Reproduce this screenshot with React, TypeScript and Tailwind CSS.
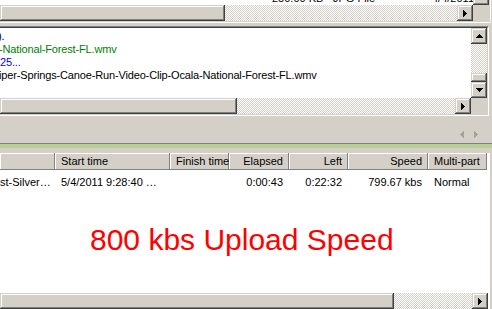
const raised =
  "shadow-[inset_-1px_-1px_#404040,inset_1px_1px_#d4d0c8,inset_-2px_-2px_#808080,inset_2px_2px_#ffffff]";
const checker =
  "bg-[conic-gradient(#ffffff_25%,#d4d0c8_0_50%,#ffffff_0_75%,#d4d0c8_0)] bg-[length:2px_2px]";

type Dir = "up" | "down" | "left" | "right";

const Arrow = ({ dir, color = "#000" }: { dir: Dir; color?: string }) => {
  const rects =
    dir === "right"
      ? [0, 1, 2, 3].map((i) => <rect key={i} x={i} y={i} width={1} height={7 - 2 * i} fill={color} />)
      : dir === "left"
      ? [0, 1, 2, 3].map((i) => <rect key={i} x={3 - i} y={i} width={1} height={7 - 2 * i} fill={color} />)
      : dir === "down"
      ? [0, 1, 2, 3].map((i) => <rect key={i} x={i} y={i} width={7 - 2 * i} height={1} fill={color} />)
      : [0, 1, 2, 3].map((i) => <rect key={i} x={i} y={3 - i} width={7 - 2 * i} height={1} fill={color} />);
  const horiz = dir === "left" || dir === "right";
  return (
    <svg width={horiz ? 4 : 7} height={horiz ? 7 : 4} shapeRendering="crispEdges">
      {rects}
    </svg>
  );
};

const ScrollBtn = ({ dir }: { dir: Dir }) => (
  <div className={`w-4 h-4 shrink-0 bg-[#d4d0c8] ${raised} flex items-center justify-center`}>
    <Arrow dir={dir} />
  </div>
);

const HScroll = ({ thumb }: { thumb: number }) => (
  <div className="flex h-4">
    <div className={`h-4 bg-[#d4d0c8] ${raised}`} style={{ width: thumb }} />
    <div className={`flex-1 ${checker}`} />
    <ScrollBtn dir="right" />
  </div>
);

const columns = [
  { label: "", w: "w-[55px]", align: "text-left" },
  { label: "Start time", w: "w-[115px]", align: "text-left" },
  { label: "Finish time", w: "w-[59px]", align: "text-left" },
  { label: "Elapsed", w: "w-[60px]", align: "text-right" },
  { label: "Left", w: "w-[59px]", align: "text-right" },
  { label: "Speed", w: "w-[80px]", align: "text-right" },
  { label: "Multi-part", w: "w-[59px]", align: "text-left" },
];

const row = ["st-Silver…", "5/4/2011 9:28:40 …", "", "0:00:43", "0:22:32", "799.67 kbs", "Normal"];

export default function App() {
  return (
    <div className="w-[492px] h-[309px] overflow-hidden bg-[#d4d0c8] flex flex-col font-['Liberation_Sans',Arial,sans-serif] text-[11px] text-black">
      {/* file list above, scrolled to its end */}
      <div className="flex flex-col w-[491px]">
        <div className="flex">
          <div className="w-[473px] flex flex-col">
            <div className="h-[5px] bg-white overflow-hidden">
              <div className="-mt-[8px] leading-[13px] flex whitespace-nowrap">
                <span className="w-[272px]" />
                <span className="w-[61px]">250.00 KB</span>
                <span className="w-[99px]">JPG File</span>
                <span className="w-[41px] overflow-hidden">4/4/2011 10:12</span>
              </div>
            </div>
            <HScroll thumb={225} />
          </div>
          <div className="w-4 flex flex-col">
            <div className="h-[5px] overflow-hidden">
              <div className={`h-4 -mt-[11px] bg-[#d4d0c8] ${raised}`} />
            </div>
            <div className="h-4 bg-[#d4d0c8]" />
          </div>
          <div className="w-[2px] border-r border-white bg-[#d4d0c8]" />
        </div>
        <div className="h-[2px] border-b border-white" />
      </div>

      {/* log window */}
      <div className="mt-[3px] w-[489px] border-t border-t-[#808080] border-r border-r-white border-b border-b-white">
        <div className="border-t border-t-[#404040] border-r border-r-[#d4d0c8] border-b border-b-[#d4d0c8] flex">
          <div className="w-[471px] flex flex-col">
            <div className="h-[70px] bg-white pt-[2px] leading-[13px] tracking-[-0.15px] whitespace-nowrap overflow-hidden">
              <div className="-ml-[2px]">).</div>
              <div className="text-[#008000] -ml-[1px]">-National-Forest-FL.wmv</div>
              <div className="text-[#0000ff]">25...</div>
              <div className="-ml-[1px]">iper-Springs-Canoe-Run-Video-Clip-Ocala-National-Forest-FL.wmv</div>
            </div>
            <HScroll thumb={237} />
          </div>
          <div className="w-4 flex flex-col">
            <ScrollBtn dir="up" />
            <div className={`h-[29px] ${checker}`} />
            <div className={`h-[9px] bg-[#d4d0c8] ${raised}`} />
            <ScrollBtn dir="down" />
            <div className="h-4 bg-[#d4d0c8]" />
          </div>
        </div>
      </div>

      {/* tab strip */}
      <div className="h-[27px] flex justify-end items-start pt-[15px] pr-[14px] gap-[10px]">
        <Arrow dir="left" color="#a6a29a" />
        <Arrow dir="right" color="#a6a29a" />
      </div>
      <div className="h-px bg-[#808080]" />
      <div className="h-[4px] bg-[#b8d094]" />
      <div className="h-[5px]" />

      {/* transfer list */}
      <div className="w-[490px] flex-1 flex flex-col border-r-2 border-r-white">
        <div className="flex-1 bg-white flex flex-col">
          <div className="flex h-[17px]">
            {columns.map((c, i) => (
              <div
                key={i}
                className={`${c.w} ${c.align} shrink-0 bg-[#d4d0c8] px-[6px] leading-[16px] whitespace-nowrap overflow-hidden shadow-[inset_-1px_-1px_#808080,inset_1px_1px_#ffffff]`}
              >
                {c.label}
              </div>
            ))}
          </div>
          <div className="flex mt-[4px] h-4 leading-4">
            {columns.map((c, i) => (
              <div key={i} className={`${c.w} ${c.align} shrink-0 ${i === 0 ? "pr-[6px]" : "px-[6px]"} whitespace-nowrap overflow-hidden`}>
                {row[i]}
              </div>
            ))}
          </div>
          <div className="mt-[35px] pl-[90px] text-[30px] leading-[30px] text-[#ff0000] whitespace-nowrap">
            800 kbs Upload Speed
          </div>
        </div>
        <div className="w-[488px] shrink-0">
          <HScroll thumb={394} />
        </div>
      </div>
    </div>
  );
}
